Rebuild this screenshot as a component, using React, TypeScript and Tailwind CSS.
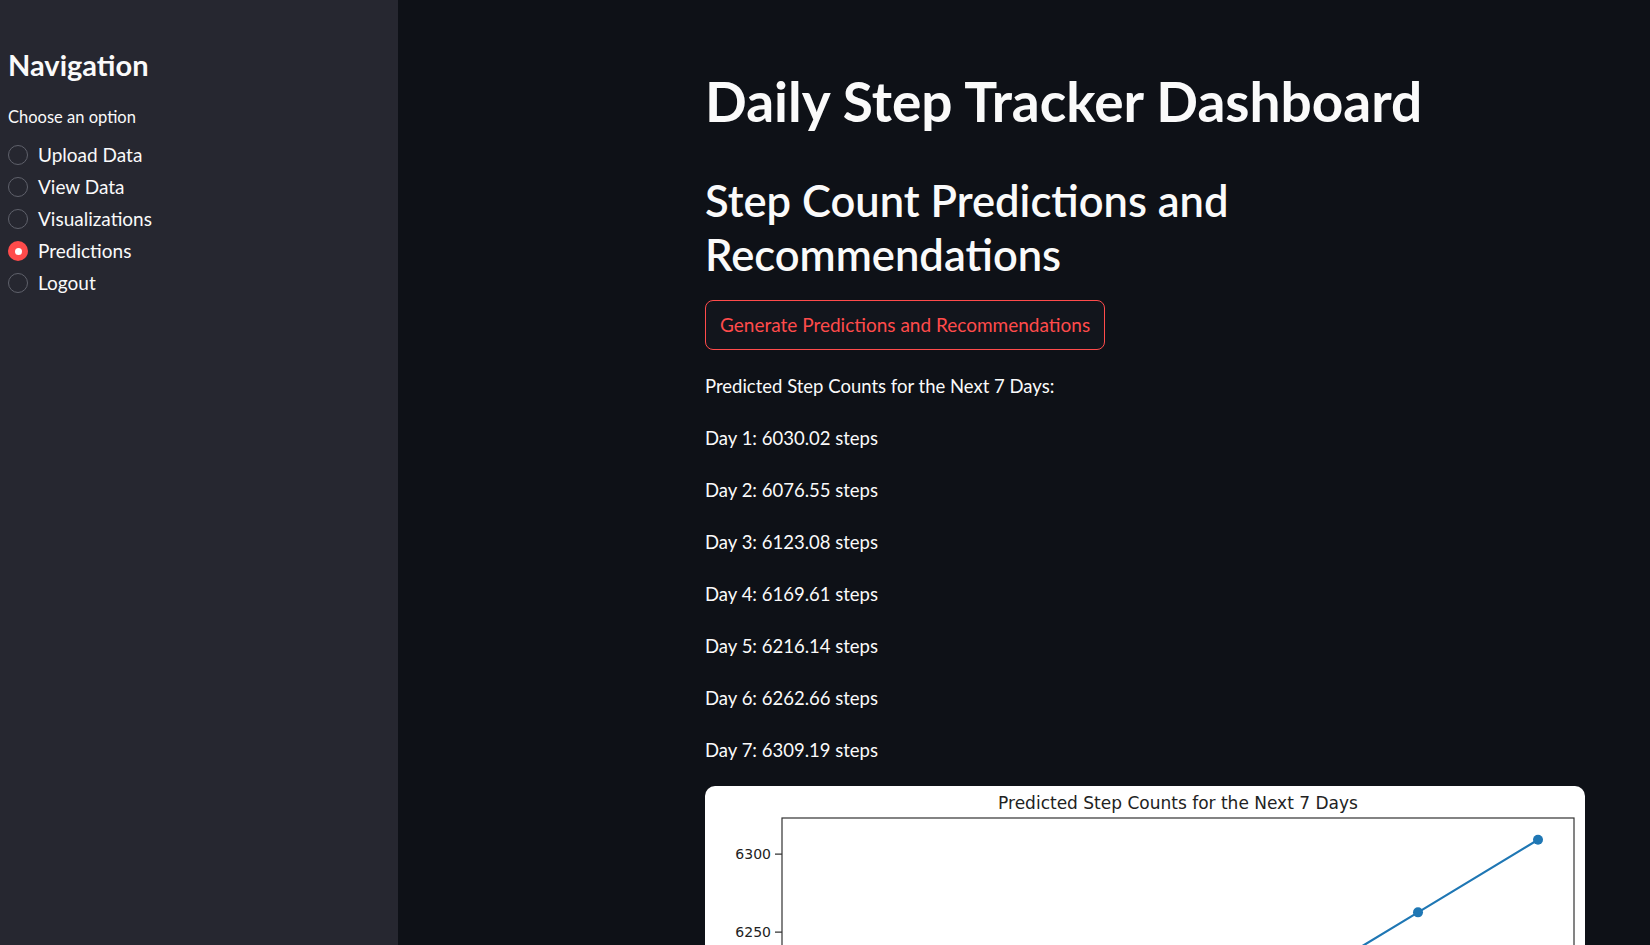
import React from 'react';

const options = ['Upload Data', 'View Data', 'Visualizations', 'Predictions', 'Logout'];
const selected = 'Predictions';

const predictions = [6030.02, 6076.55, 6123.08, 6169.61, 6216.14, 6262.66, 6309.19];

const font = { fontFamily: 'Lato, "Noto Sans", sans-serif' };

// chart mapping (matplotlib-like axes, 5% margins)
const yTop = 6323.15;
const yPx = (v: number) => 32 + (yTop - v) * 1.56;
const xPx = (d: number) => 77 + (d - 0.7) * 120;

function Radio({ label, active }: { label: string; active: boolean }) {
  return (
    <div className="flex items-center h-8">
      {active ? (
        <span className="w-5 h-5 rounded-full bg-[#ff4b4b] flex items-center justify-center">
          <span className="w-[7px] h-[7px] rounded-full bg-white" />
        </span>
      ) : (
        <span className="w-5 h-5 rounded-full border-[1.5px] border-[#5f616b]" />
      )}
      <span className="ml-[10px] text-[19px] text-[#fafafa]">{label}</span>
    </div>
  );
}

function Chart() {
  const ticks = [6050, 6100, 6150, 6200, 6250, 6300];
  const pts = predictions.map((v, i) => [xPx(i + 1), yPx(v)]);
  return (
    <div className="bg-white rounded-[10px] w-[880px] h-[560px] mt-[21px] shrink-0 overflow-hidden">
      <svg width="880" height="560" style={{ fontFamily: '"DejaVu Sans", sans-serif' }}>
        <text x="473" y="23" textAnchor="middle" fontSize="17" fill="#222">
          Predicted Step Counts for the Next 7 Days
        </text>
        <rect x="77" y="32" width="792" height="479" fill="none" stroke="#333" strokeWidth="1.2" />
        {ticks.map(t => (
          <g key={t}>
            <line x1="70" x2="77" y1={yPx(t)} y2={yPx(t)} stroke="#333" strokeWidth="1.2" />
            <text x="66" y={yPx(t)} textAnchor="end" dominantBaseline="central" fontSize="14" fill="#222">
              {t}
            </text>
          </g>
        ))}
        <polyline
          points={pts.map(p => p.join(',')).join(' ')}
          fill="none"
          stroke="#1f77b4"
          strokeWidth="2.2"
        />
        {pts.map(([x, y], i) => (
          <circle key={i} cx={x} cy={y} r="5" fill="#1f77b4" />
        ))}
      </svg>
    </div>
  );
}

export default function App() {
  return (
    <div className="flex h-screen w-full overflow-hidden bg-[#0e1117] text-[#fafafa]" style={font}>
      {/* SIDEBAR */}
      <aside className="w-[398px] shrink-0 bg-[#262730] pl-2 pt-[45px]">
        <h2 className="text-[29px] leading-[40px] font-bold">Navigation</h2>
        <p className="mt-5 text-[16.5px] leading-6">Choose an option</p>
        <div className="mt-[10px] flex flex-col">
          {options.map(o => (
            <Radio key={o} label={o} active={o === selected} />
          ))}
        </div>
      </aside>

      {/* MAIN */}
      <main className="flex-1 pl-[307px] pt-[66px]">
        <div className="w-[880px] flex flex-col items-start">
          <h1 className="text-[55px] leading-[70px] font-bold">Daily Step Tracker Dashboard</h1>
          <h2 className="mt-[37px] text-[43.5px] leading-[54px] font-semibold">
            Step Count Predictions and
            <br />
            Recommendations
          </h2>
          <button className="mt-[19px] h-[50px] px-[14px] rounded-lg border border-[#ff4b4b] bg-[#12151c] text-[#ff4b4b] text-[19px]">
            Generate Predictions and Recommendations
          </button>
          <p className="mt-[21px] text-[18.5px] leading-[30px]">Predicted Step Counts for the Next 7 Days:</p>
          {predictions.map((v, i) => (
            <p key={i} className="mt-[22px] text-[18.5px] leading-[30px]">
              Day {i + 1}: {v.toFixed(2)} steps
            </p>
          ))}
          <Chart />
        </div>
      </main>
    </div>
  );
}
